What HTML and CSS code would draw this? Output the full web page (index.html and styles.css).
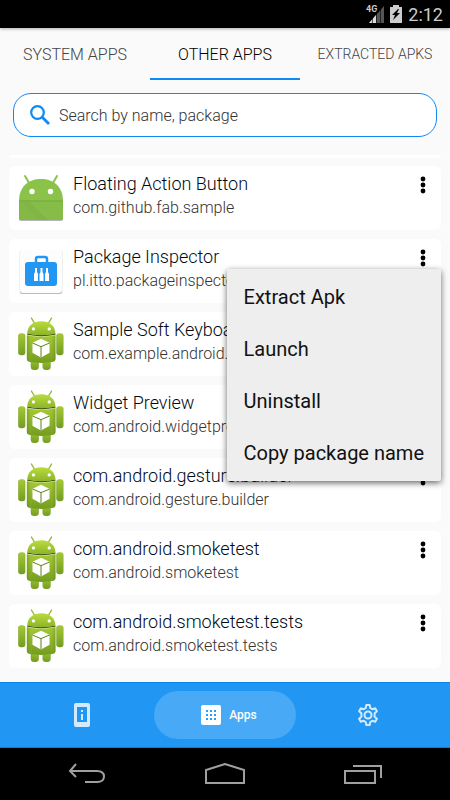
FILE: index.html
```html
<!DOCTYPE html>
<html lang="en">
<head>
    <meta charset="UTF-8">
    <meta name="viewport" content="width=device-width, initial-scale=1.0">
    <title>Package Inspector</title>
    <link rel="stylesheet" href="styles.css">
</head>
<body>
    <!-- shared shapes -->
    <svg class="defs" aria-hidden="true">
        <defs>
            <linearGradient id="green" x1="0" y1="0" x2="0" y2="1">
                <stop offset="0" stop-color="#a6ca34"/>
                <stop offset="1" stop-color="#739c20"/>
            </linearGradient>
            <linearGradient id="head" x1="0" y1="0" x2="0" y2="1">
                <stop offset="0" stop-color="#b9dc3c"/>
                <stop offset="1" stop-color="#8db42a"/>
            </linearGradient>
            <linearGradient id="side" x1="0" y1="0" x2="1" y2="0">
                <stop offset="0" stop-color="#5e8416" stop-opacity=".5"/>
                <stop offset=".2" stop-color="#a4ca39" stop-opacity="0"/>
                <stop offset=".8" stop-color="#a4ca39" stop-opacity="0"/>
                <stop offset="1" stop-color="#5e8416" stop-opacity=".5"/>
            </linearGradient>
        </defs>
        <symbol id="robot" viewBox="54 22 140 164">
            <path d="M95 25l9 15M156 25l-9 15" stroke="#94b832" stroke-width="4" stroke-linecap="round"/>
            <rect x="93" y="145" width="24" height="38" rx="10" fill="url(#green)"/>
            <rect x="129" y="145" width="24" height="38" rx="10" fill="url(#green)"/>
            <rect x="93" y="145" width="24" height="38" rx="10" fill="url(#side)"/>
            <rect x="129" y="145" width="24" height="38" rx="10" fill="url(#side)"/>
            <rect x="55" y="71" width="21" height="67" rx="8" fill="url(#green)"/>
            <rect x="171" y="71" width="21" height="67" rx="8" fill="url(#green)"/>
            <rect x="55" y="71" width="21" height="67" rx="8" fill="url(#side)"/>
            <rect x="171" y="71" width="21" height="67" rx="8" fill="url(#side)"/>
            <path d="M81 77q43 8 87 0v72q0 8-9 10q-34 5-69 0q-9-2-9-10z" fill="url(#green)"/>
            <path d="M81 77q43 8 87 0v72q0 8-9 10q-34 5-69 0q-9-2-9-10z" fill="url(#side)"/>
            <path d="M82 72q42 9 86 0v4q-43 9-86 0z" fill="#3f5710"/>
            <path d="M82 73c0-24 19-38 43-38s43 14 43 38q-43 8-86 0z" fill="url(#head)"/>
            <circle cx="101" cy="58" r="5" fill="#fff"/>
            <circle cx="149" cy="58" r="5" fill="#fff"/>
            <path d="M124 88l26 12v31l-26 14-26-14v-31z" fill="#fff"/>
            <path d="M98 101l26 11 26-11M124 112v32" stroke="#5c7f1b" stroke-width="3" fill="none"/>
        </symbol>
        <symbol id="dots" viewBox="0 0 6 18">
            <circle cx="3" cy="3" r="2.4"/>
            <circle cx="3" cy="9" r="2.4"/>
            <circle cx="3" cy="15" r="2.4"/>
        </symbol>
    </svg>

    <header class="status">
        <span class="network">4G</span>
        <svg class="signal" width="15" height="17" viewBox="0 0 15 17">
            <path d="M0 17L15 0v17z" fill="#555"/>
            <path d="M0 17l7-8v8z" fill="#ddd"/>
            <path d="M3.500 9v8M7.500 4v13M11.500 0v17" stroke="#000" stroke-width=".6"/>
        </svg>
        <svg width="12" height="18" viewBox="0 0 12 18">
            <path d="M3 0h6v2h3v16H0V2h3z" fill="#ccc"/>
            <path d="M8 4L2 10h3l-2 5 7-7H7l2-4z" fill="#000"/>
        </svg>
        <span class="clock">2:12</span>
    </header>

    <nav class="tabs">
        <button class="tab">SYSTEM APPS</button>
        <button class="tab active">OTHER APPS</button>
        <button class="tab small">EXTRACTED APKS</button>
    </nav>

    <main class="content">
        <label class="search">
            <svg width="20" height="20" viewBox="0 0 20 20" fill="none" stroke="#0c8af5">
                <circle cx="7.500" cy="7.500" r="6.300" stroke-width="2.200"/>
                <path d="M12 12l7 7" stroke-width="2.800"/>
            </svg>
            <input type="text" placeholder="Search by name, package" aria-label="Search by name, package">
        </label>

        <div class="edge"></div>

        <ul class="apps">
            <li class="app">
                <svg class="icon" width="46" height="54" viewBox="0 0 46 54">
                    <path d="M7 5l4 7M39 5l-4 7" stroke="#8bc34a" stroke-width="2" stroke-linecap="round"/>
                    <path d="M1 46h44v2q0 2-2 2H3q-2 0-2-2z" fill="#b5b5b5"/>
                    <path d="M1 30C1 16 10 8 23 8s22 8 22 22v17q0 2-2 2H3q-2 0-2-2z" fill="#8bc34a"/>
                    <path d="M3 31l18 18H3q-2 0-2-2V31z" fill="#84b946"/>
                    <path d="M3 31l18 18h22q2 0 2-2V31z" fill="#86bc48"/>
                    <path d="M3 31l18 18h9L12 31z" fill="#7cb043" opacity=".5"/>
                    <path d="M1 30h44" stroke="#73a33d"/>
                    <circle cx="14" cy="20.500" r="2.700" fill="#fff"/>
                    <circle cx="32.500" cy="20.500" r="2.700" fill="#fff"/>
                </svg>
                <div class="text">
                    <h2>Floating Action Button</h2>
                    <p>com.github.fab.sample</p>
                </div>
                <button class="more" aria-label="More"><svg width="6" height="18"><use href="#dots"/></svg></button>
            </li>
            <li class="app">
                <svg class="icon" width="46" height="54" viewBox="0 0 46 54">
                    <rect x="1" y="6" width="44" height="44" rx="3" fill="#f0f0f0"/>
                    <path d="M2 47h42v1q0 2-2 2H4q-2 0-2-2z" fill="#bbb"/>
                    <rect x="2" y="6" width="42" height="43" rx="3" fill="#fdfdfd"/>
                    <rect x="18" y="13" width="11" height="8" rx="2" fill="none" stroke="#2196f3" stroke-width="2.500"/>
                    <rect x="7" y="18" width="32" height="24" rx="3" fill="#2196f3"/>
                    <path d="M17 24h2v4l1 2v7h-4v-7l1-2zM22.500 24h2v4l1 2v7h-4v-7l1-2zM28 24h2v4l1 2v7h-4v-7l1-2z" fill="#fff"/>
                </svg>
                <div class="text">
                    <h2>Package Inspector</h2>
                    <p>pl.itto.packageinspector</p>
                </div>
                <button class="more" aria-label="More"><svg width="6" height="18"><use href="#dots"/></svg></button>
                <div class="menu">
                    <button>Extract Apk</button>
                    <button>Launch</button>
                    <button>Uninstall</button>
                    <button>Copy package name</button>
                </div>
            </li>
            <li class="app">
                <svg class="icon" width="46" height="54"><use href="#robot"/></svg>
                <div class="text">
                    <h2>Sample Soft Keyboard</h2>
                    <p>com.example.android.softkeyboard</p>
                </div>
                <button class="more" aria-label="More"><svg width="6" height="18"><use href="#dots"/></svg></button>
            </li>
            <li class="app">
                <svg class="icon" width="46" height="54"><use href="#robot"/></svg>
                <div class="text">
                    <h2>Widget Preview</h2>
                    <p>com.android.widgetpreview</p>
                </div>
                <button class="more" aria-label="More"><svg width="6" height="18"><use href="#dots"/></svg></button>
            </li>
            <li class="app">
                <svg class="icon" width="46" height="54"><use href="#robot"/></svg>
                <div class="text">
                    <h2>com.android.gesture.builder</h2>
                    <p>com.android.gesture.builder</p>
                </div>
                <button class="more" aria-label="More"><svg width="6" height="18"><use href="#dots"/></svg></button>
            </li>
            <li class="app">
                <svg class="icon" width="46" height="54"><use href="#robot"/></svg>
                <div class="text">
                    <h2>com.android.smoketest</h2>
                    <p>com.android.smoketest</p>
                </div>
                <button class="more" aria-label="More"><svg width="6" height="18"><use href="#dots"/></svg></button>
            </li>
            <li class="app">
                <svg class="icon" width="46" height="54"><use href="#robot"/></svg>
                <div class="text">
                    <h2>com.android.smoketest.tests</h2>
                    <p>com.android.smoketest.tests</p>
                </div>
                <button class="more" aria-label="More"><svg width="6" height="18"><use href="#dots"/></svg></button>
            </li>
        </ul>
    </main>

    <nav class="bottom">
        <button class="item" aria-label="Device info">
            <svg width="16" height="24" viewBox="0 0 16 24">
                <path fill="#d3eafd" fill-rule="evenodd" d="M2 0h12q2 0 2 2v20q0 2-2 2H2q-2 0-2-2V2q0-2 2-2zM3 4v15h10V4z"/>
                <path fill="#d3eafd" d="M7 7h2v2H7zM7 11h2v6H7z"/>
            </svg>
        </button>
        <button class="item current">
            <svg width="20" height="20" viewBox="0 0 20 20">
                <rect width="20" height="20" rx="2" fill="#fff"/>
                <path d="M5 6h10M5 10h10M5 14h10" stroke="#2f9cf4" stroke-width="2" stroke-dasharray="2 2"/>
            </svg>
            <span>Apps</span>
        </button>
        <button class="item" aria-label="Settings">
            <svg width="24" height="24" viewBox="0 0 24 24" fill="none" stroke="#d3eafd" stroke-width="2" stroke-linejoin="round">
                <path d="M10.300 2h3.400l.6 3 2 1.200 2.900-1 1.700 3-2.300 2v3.600l2.300 2-1.700 3-2.900-1-2 1.200-.6 3h-3.400l-.6-3-2-1.200-2.900 1-1.700-3 2.300-2v-3.600l-2.300-2 1.700-3 2.900 1 2-1.200z"/>
                <circle cx="12" cy="12" r="3.500"/>
            </svg>
        </button>
    </nav>

    <footer class="system">
        <button aria-label="Back">
            <svg width="38" height="22" viewBox="0 0 38 22">
                <path d="M8 1L2 8l6 6M2 8h27q7 0 7 5.500t-7 5.500H17"/>
            </svg>
        </button>
        <button aria-label="Home">
            <svg width="42" height="22" viewBox="0 0 42 22">
                <path d="M2 20V7l19-6 19 6v13z"/>
            </svg>
        </button>
        <button aria-label="Recent apps">
            <svg width="38" height="22" viewBox="0 0 38 22">
                <path d="M1 8h30v12H1zM9 3h28v12"/>
            </svg>
        </button>
    </footer>
</body>
</html>
```

FILE: styles.css
```css
* {
    box-sizing: border-box;
}
body {
    margin: 0;
    min-height: 100vh;
    display: flex;
    flex-direction: column;
    background-color: #fafafa;
    font-family: Roboto, "Liberation Sans", sans-serif;
}
button {
    border: 0;
    padding: 0;
    background: none;
    font-family: inherit;
    color: inherit;
}
svg {
    display: block;
    flex-shrink: 0;
}
.defs {
    position: absolute;
    width: 0;
    height: 0;
}
.status {
    height: 28px;
    padding: 0 7px;
    display: flex;
    align-items: center;
    justify-content: flex-end;
    background-color: black;
    color: #ccc;
    box-shadow: 0 1px 3px rgba(0, 0, 0, 0.3);
}
.network {
    align-self: flex-start;
    padding-top: 4px;
    font-size: 9px;
    font-weight: 700;
}
.signal {
    margin-left: -8px;
    margin-right: 6px;
}
.clock {
    margin-left: 6px;
    font-size: 18px;
}
.tabs {
    height: 52px;
    display: grid;
    grid-template-columns: 1fr 1fr 1fr;
}
.tab {
    padding-top: 2px;
    border-bottom: 2px solid transparent;
    font-size: 16px;
    font-weight: 300;
    color: #444;
    white-space: nowrap;
}
.tab.active {
    border-bottom-color: #0c8af5;
    color: black;
}
.tab.small {
    font-size: 14px;
}
.content {
    flex: 1;
    padding: 13px 9px;
}
.search {
    height: 44px;
    margin: 0 4px;
    padding: 0 16px;
    display: flex;
    align-items: center;
    gap: 9px;
    border: 1px solid #0c8af5;
    border-radius: 18px;
    background-color: white;
}
.search input {
    flex: 1;
    min-width: 0;
    border: 0;
    padding: 0;
    outline: 0;
    background: none;
    font-family: inherit;
    font-size: 16px;
    font-weight: 300;
}
.search input::placeholder {
    color: #333;
}
.edge {
    height: 3px;
    margin: 18px 0 8px;
    border-radius: 0 0 4px 4px;
    background-color: white;
}
.apps {
    margin: 0;
    padding: 0;
    list-style: none;
    display: flex;
    flex-direction: column;
    gap: 9px;
}
.app {
    position: relative;
    height: 64px;
    padding: 0 15px 0 9px;
    display: flex;
    align-items: center;
    gap: 9px;
    border-radius: 6px;
    background-color: white;
}
.text {
    flex: 1;
    min-width: 0;
    padding-bottom: 4px;
    white-space: nowrap;
}
.text h2,
.text p {
    margin: 0;
    overflow: hidden;
    text-overflow: ellipsis;
    line-height: 24px;
}
.text h2 {
    font-size: 18px;
    font-weight: 300;
    color: #000a14;
}
.text p {
    font-size: 16px;
    font-weight: 300;
    color: #333;
}
.more {
    align-self: flex-start;
    padding-top: 10px;
}
.menu {
    position: absolute;
    top: 30px;
    right: 0;
    z-index: 1;
    padding: 2px 0;
    display: flex;
    flex-direction: column;
    background-color: #eee;
    border-radius: 2px;
    box-shadow: 0 2px 6px rgba(0, 0, 0, 0.6);
}
.menu button {
    height: 52px;
    padding: 0 17px;
    font-size: 20px;
    text-align: left;
    color: #111;
}
.bottom {
    height: 66px;
    padding: 0 11px;
    display: grid;
    grid-template-columns: 1fr 1fr 1fr;
    align-items: center;
    background-color: #2196f3;
    border-top: 1px solid #0c84e4;
    border-bottom: 1px solid #1976c8;
}
.item {
    height: 48px;
    display: flex;
    align-items: center;
    justify-content: center;
    gap: 8px;
    border-radius: 24px;
    color: white;
    font-size: 12px;
    font-weight: 500;
}
.item.current {
    padding-left: 8px;
    background-color: #48a9f6;
}
.system {
    height: 52px;
    padding: 0 18px;
    display: grid;
    grid-template-columns: 1fr 1fr 1fr;
    background-color: black;
}
.system button {
    display: flex;
    align-items: center;
    justify-content: center;
}
.system svg {
    fill: none;
    stroke: #a0a0a0;
    stroke-width: 2;
}
```
